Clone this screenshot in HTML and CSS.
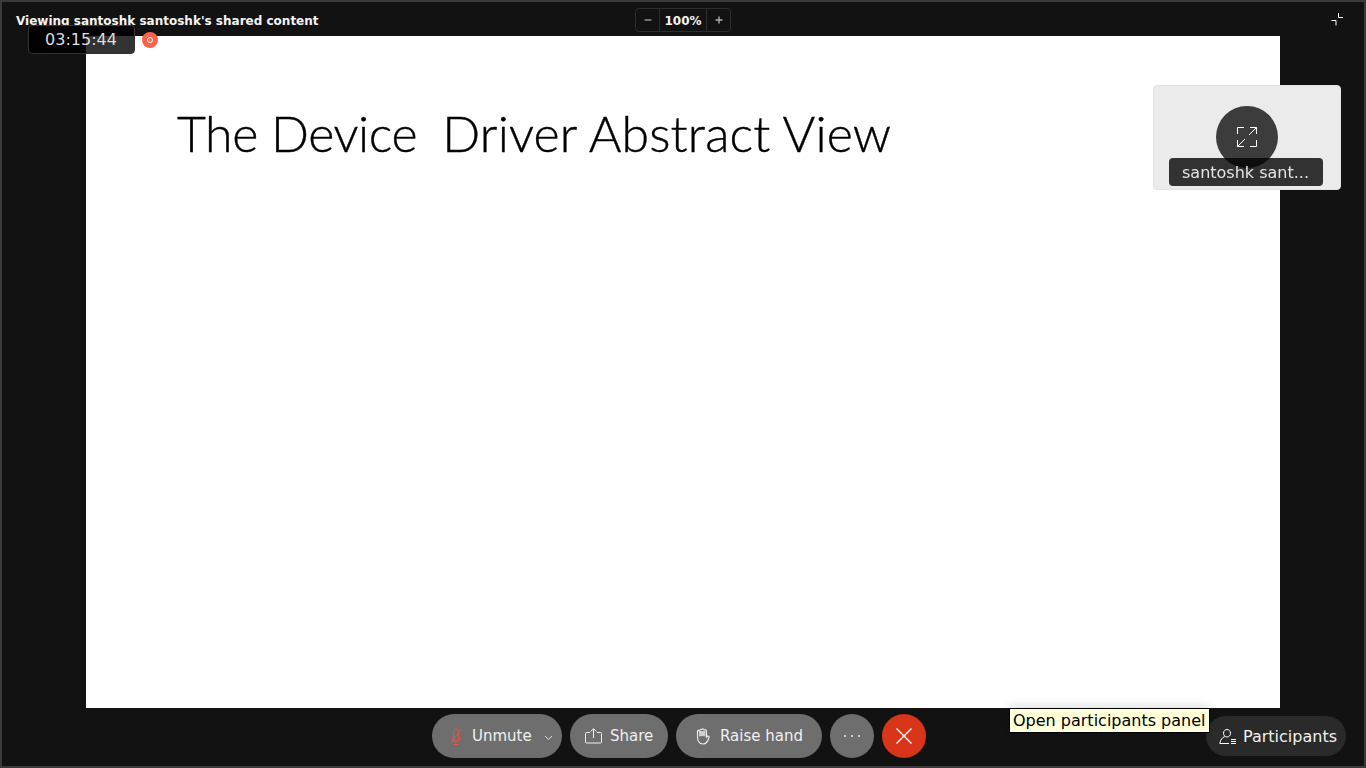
FILE: index.html
```html
<!DOCTYPE html>
<html lang="en">
<head>
<meta charset="utf-8">
<title>Shared content</title>
<link rel="stylesheet" href="styles.css">
</head>
<body>
<div class="app">
  <header class="topbar">
    <div class="viewing">Viewing santoshk santoshk's shared content</div>
    <div class="zoom">
      <button class="zoom-btn">
        <svg width="8" height="8" viewBox="0 0 8 8"><path d="M0.500 4h7" stroke="#9a9a9a" stroke-width="1.400"/></svg>
      </button>
      <span class="zoom-val">100%</span>
      <button class="zoom-btn">
        <svg width="8" height="8" viewBox="0 0 8 8"><path d="M0.500 4h7M4 .5v7" stroke="#b0b0b0" stroke-width="1.400"/></svg>
      </button>
    </div>
    <svg class="collapse" width="13" height="13" viewBox="0 0 13 13" fill="none" stroke="#fff" stroke-width="1"><path d="M0.500 7.500h4.500v5M7.500 0v4.500h4.500"/></svg>
  </header>
  <main class="stage">
    <section class="slide">
      <h1 class="slide-title"><span class="t-first">The Device</span><span class="t-gap">&nbsp; </span><span class="t-second">Driver Abstract View</span></h1>
    </section>
  </main>
  <footer class="controls">
    <div class="ctrl-group">
      <button class="pill unmute">
        <svg width="12" height="17" viewBox="0 0 12 17" fill="none" stroke="#e0563f" stroke-width="1"><path d="M3.500 10V3.500a2.500 2.500 0 0 1 5 0V10a2.500 2.500 0 0 1-5 0z"/><path d="M1.500 9.500a4.500 4.500 0 0 0 9 0M6 14.500V16.500M3.500 16.500h5M11 1L1 15"/></svg>
        <span>Unmute</span>
        <svg class="chev" width="9" height="6" viewBox="0 0 9 6" fill="none" stroke="#dcdcdc" stroke-width="1"><path d="M1 1l3.500 3.500L8 1"/></svg>
      </button>
      <button class="pill share">
        <svg width="17" height="16" viewBox="0 0 17 16" fill="none" stroke="#f0f0f0" stroke-width="1"><path d="M5 4.500H1.500a1 1 0 0 0-1 1V14a1 1 0 0 0 1 1h14a1 1 0 0 0 1-1V5.500a1 1 0 0 0-1-1H12M8.500 10V1M5.500 3.500L8.500 .8l3 2.700"/></svg>
        <span>Share</span>
      </button>
      <button class="pill raise">
        <svg width="14" height="18" viewBox="0 0 14 18" fill="none" stroke="#f0f0f0" stroke-width="1.100"><path d="M1.500 10V4.500c0-1.500 1.800-1.500 1.800 0C3.300 2 5.800 2 5.800 3 6 1.500 8.300 1.500 8.300 3.500c.2-1 2.200-1 2.200.5v6c1-1.500 3-1 2.500.5-.8 3-2.300 6.500-6 6.500-3.800 0-5.500-3-5.500-7z" /><path d="M3 4h6.500v5.500C7.500 8.700 5.500 8.700 3 9.500z" fill="#cfcfcf" stroke="none"/></svg>
        <span>Raise hand</span>
      </button>
      <button class="round more">
        <svg width="18" height="4" viewBox="0 0 18 4" fill="#eee"><circle cx="2" cy="2" r="1"/><circle cx="9" cy="2" r="1"/><circle cx="16" cy="2" r="1"/></svg>
      </button>
      <button class="round leave">
        <svg width="18" height="18" viewBox="0 0 18 18" stroke="#fff" stroke-width="1.400"><path d="M1.500 1.500l15 15M16.500 1.500l-15 15"/></svg>
      </button>
    </div>
    <button class="participants">
      <svg width="17" height="17" viewBox="0 0 17 17" fill="none" stroke="#fff" stroke-width="1"><path d="M8 1.500c-2 0-3.500 1.500-3.500 3.700S6 9 8 9s3.500-1.600 3.500-3.800S10 1.500 8 1.500zM5.800 8.500C3 9.500 1.500 12 .8 15.500H10M12 11.500h5M12 13.500h5M12 15.500h5"/></svg>
      <span>Participants</span>
    </button>
  </footer>

  <div class="timer">03:15:44</div>
  <div class="rec"><span class="rec-dot"></span></div>
  <aside class="thumb">
    <div class="expand">
      <svg width="22" height="22" viewBox="0 0 22 22" fill="none" stroke="#fff" stroke-width="1"><path d="M1.500 8V1.500H8M14 1.500h6.500V8M20.500 1.500L13 9M1.500 14v6.500H8M14 20.500h6.500V14M1.500 20.500L9 13"/></svg>
    </div>
    <div class="thumb-name"><span class="thumb-text">santoshk sant...</span></div>
  </aside>
  <div class="tooltip">Open participants panel</div>
</div>
</body>
</html>
```
FILE: styles.css
```css
* { box-sizing: border-box; }
html, body { margin: 0; height: 100%; overflow: hidden; }
body { font-family: "DejaVu Sans", sans-serif; background: #121212; }
button { font: inherit; border: 0; padding: 0; color: inherit; }
.app {
  position: relative;
  width: 1366px;
  height: 768px;
  display: flex;
  flex-direction: column;
  background: #121212;
  border: 2px solid #3a3a3a;
  color: #f0f0f0;
}
.topbar {
  height: 34px;
  flex: none;
  display: grid;
  grid-template-columns: 1fr auto 1fr;
  align-items: center;
  padding: 0 14px;
}
.viewing { font-size: 12px; font-weight: 700; color: #f4f4f4; position: relative; top: 2px; white-space: nowrap; }
.zoom {
  display: flex;
  align-items: stretch;
  width: 96px;
  height: 24px;
  border: 1px solid #2e2e2e;
  border-radius: 4px;
  position: relative;
  top: 1px;
}
.zoom-btn { width: 23px; background: transparent; display: flex; align-items: center; justify-content: center; }
.zoom-val {
  flex: 1;
  border-left: 1px solid #2e2e2e;
  border-right: 1px solid #2e2e2e;
  text-align: center;
  font-size: 12px;
  font-weight: 700;
  line-height: 24px;
  color: #f4f4f4;
}
.collapse { justify-self: end; margin-right: 6px; margin-top: 1px; }
.stage { flex: 1; display: flex; justify-content: center; min-height: 0; }
.slide { width: 1194px; height: 672px; background: #fff; padding: 62px 0 0 91px; }
.slide-title { margin: 0; font-family: Lato, sans-serif; font-weight: 300; font-size: 50px; line-height: 70px; color: #000; white-space: nowrap; -webkit-text-stroke: 0.4px #000; }
.t-first { letter-spacing: -0.42px; }
.t-gap { word-spacing: -1px; }
.t-second { letter-spacing: 0.16px; }
.controls {
  height: 58px;
  flex: none;
  position: relative;
  display: flex;
  justify-content: center;
  align-items: flex-start;
  padding-top: 6px;
}
.ctrl-group { display: flex; gap: 8px; margin-right: 8px; }
.pill {
  height: 44px;
  border-radius: 22px;
  background: #6e6e6e;
  color: #f0f0f0;
  font-size: 15px;
  display: flex;
  align-items: center;
}
.unmute { width: 130px; padding-left: 18px; gap: 10px; position: relative; }
.chev { position: absolute; right: 9px; top: 21px; }
.share { width: 98px; padding-left: 15px; gap: 8px; }
.raise { width: 146px; padding-left: 20px; gap: 10px; }
.round { width: 44px; height: 44px; border-radius: 50%; display: flex; align-items: center; justify-content: center; }
.more { background: #6e6e6e; }
.leave { background: #d8351a; }
.participants {
  position: absolute;
  right: 18px;
  top: 8px;
  width: 140px;
  height: 40px;
  border-radius: 20px;
  background: #2a2a2a;
  color: #f0f0f0;
  font-size: 16px;
  display: flex;
  align-items: center;
  padding-left: 13px;
  gap: 7px;
}
.timer {
  position: absolute;
  left: 26px;
  top: 23px;
  width: 107px;
  height: 29px;
  border: 1px solid #333;
  border-radius: 4px;
  background: linear-gradient(#000 0 10px, transparent 10px), linear-gradient(90deg, #000 0 57px, #333 57px);
  color: #ddd;
  font-size: 16px;
  line-height: 28px;
  text-align: center;
  text-indent: -1px;
}
.rec {
  position: absolute;
  left: 140px;
  top: 30px;
  width: 16px;
  height: 16px;
  border-radius: 50%;
  background: #f9644a;
  display: flex;
  align-items: center;
  justify-content: center;
}
.rec-dot { width: 6px; height: 6px; border: 1px solid #fff; border-radius: 50%; }
.thumb {
  position: absolute;
  left: 1151px;
  top: 83px;
  width: 188px;
  height: 105px;
  border-radius: 4px;
  background: #ebebeb;
  border: 1px solid #e2e2e2;
  isolation: isolate;
}
.expand {
  position: absolute;
  left: 62px;
  top: 20px;
  width: 62px;
  height: 62px;
  border-radius: 50%;
  background: #3c3c3c;
  display: flex;
  align-items: center;
  justify-content: center;
}
.thumb-name {
  position: absolute;
  left: 15px;
  top: 72px;
  width: 154px;
  height: 28px;
}
.thumb-name::before {
  content: "";
  position: absolute;
  inset: 0;
  border-radius: 4px;
  background: #363636;
  mix-blend-mode: multiply;
}
.thumb-text {
  position: relative;
  display: block;
  color: #e4e4e4;
  font-size: 16px;
  line-height: 29px;
  text-align: center;
  text-indent: -1px;
}
.tooltip {
  position: absolute;
  left: 1007px;
  top: 706px;
  height: 25px;
  padding: 0 3px;
  background: #ffffdc;
  border: 1px solid #000;
  color: #000;
  font-size: 16px;
  line-height: 24px;
  white-space: nowrap;
  box-shadow: 0 -3px 8px rgba(0, 0, 0, .12);
}
```
